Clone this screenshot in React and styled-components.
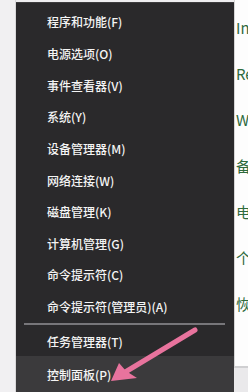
import React from "react";
import styled, { createGlobalStyle } from "styled-components";

const Global = createGlobalStyle`
  html, body { margin: 0; padding: 0; background: #efeef0; }
  body { font-family: "Noto Sans CJK SC", "Noto Sans", sans-serif; }
`;

const Page = styled.div`
  position: relative;
  display: flex;
  width: 248px;
  height: 392px;
  overflow: hidden;
  background: #efeef0;
`;

const LeftStrip = styled.div`
  width: 15px;
  flex: none;
  background: #f1f0f2;
  border-right: 1px solid #d9d8da;
`;

const Menu = styled.div`
  width: 218px;
  flex: none;
  margin-top: 2px;
  background: #2a292b;
  border-top: 1px solid #3e3d3f;
  padding-top: 3px;
  display: flex;
  flex-direction: column;
`;

const Item = styled.div`
  height: ${(p) => p.$h || 32}px;
  display: flex;
  align-items: center;
  padding-left: 31px;
  font-size: 12px;
  font-weight: 500;
  color: #f4f4f4;
  white-space: nowrap;
  background: ${(p) => (p.$active ? "#3b3a3c" : "transparent")};
`;

const Separator = styled.div`
  height: 2px;
  margin: 1px 9px 1px 8px;
  background: #77767a;
`;

const RightStrip = styled.div`
  flex: 1;
  display: flex;
  flex-direction: column;
  overflow: hidden;
`;

const RightPage = styled.div`
  height: 351px;
  background: #fdfdfd;
  border-left: 1px solid #d6d6d6;
  border-bottom: 2px solid #cfcfd1;
  padding-top: 15px;
  display: flex;
  flex-direction: column;
  gap: 21px;
`;

const RightText = styled.div`
  height: 25px;
  line-height: 25px;
  font-size: 15px;
  padding-left: 1px;
  color: #2f6a3d;
  white-space: nowrap;
`;

const RightBottom = styled.div`
  flex: 1;
  background: #eae9eb;
`;

const Arrow = styled.svg`
  position: absolute;
  left: 0;
  top: 0;
  pointer-events: none;
`;

const items = [
  "程序和功能(F)",
  "电源选项(O)",
  "事件查看器(V)",
  "系统(Y)",
  "设备管理器(M)",
  "网络连接(W)",
  "磁盘管理(K)",
  "计算机管理(G)",
  "命令提示符(C)",
  "命令提示符(管理员)(A)",
];

const rightTexts = ["In", "Re", "W", "备", "电", "个", "恢"];

export default function App() {
  return (
    <>
      <Global />
      <Page>
        <LeftStrip />
        <Menu>
          {items.map((t) => (
            <Item key={t} $h={31.8}>{t}</Item>
          ))}
          <Separator />
          <Item $h={30}>任务管理器(T)</Item>
          <Item $h={36} $active>控制面板(P)</Item>
        </Menu>
        <RightStrip>
          <RightPage>
            {rightTexts.map((t) => (
              <RightText key={t}>{t}</RightText>
            ))}
          </RightPage>
          <RightBottom />
        </RightStrip>
        <Arrow width="248" height="392" viewBox="0 0 248 392">
          <line
            x1="195"
            y1="330"
            x2="122"
            y2="374"
            stroke="#e8739d"
            strokeWidth="5"
            strokeLinecap="round"
          />
          <path d="M111 381 L119 363 L126 371 L137 378 Z" fill="#e8739d" />
        </Arrow>
      </Page>
    </>
  );
}
